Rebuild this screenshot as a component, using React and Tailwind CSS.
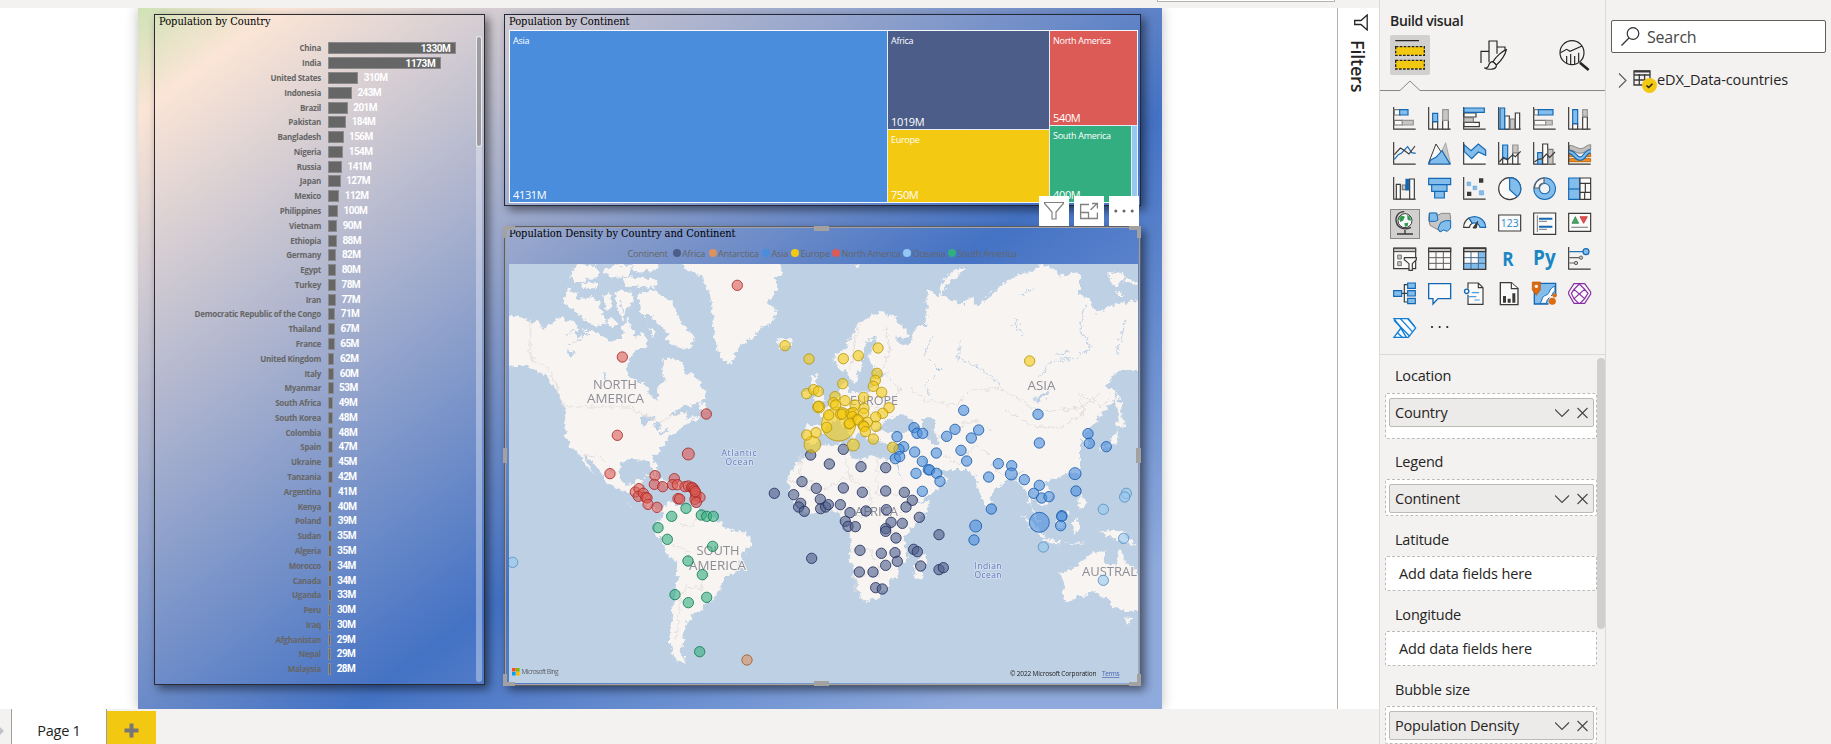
import React from "react";

const ui = "font-['Open_Sans','Noto_Sans',sans-serif]";
const serif = "font-['DejaVu_Serif_Condensed','DejaVu_Serif',serif]";

const countries = [
  ["China", 1330], ["India", 1173], ["United States", 310], ["Indonesia", 243], ["Brazil", 201],
  ["Pakistan", 184], ["Bangladesh", 156], ["Nigeria", 154], ["Russia", 141], ["Japan", 127],
  ["Mexico", 112], ["Philippines", 100], ["Vietnam", 90], ["Ethiopia", 88], ["Germany", 82],
  ["Egypt", 80], ["Turkey", 78], ["Iran", 77], ["Democratic Republic of the Congo", 71],
  ["Thailand", 67], ["France", 65], ["United Kingdom", 62], ["Italy", 60], ["Myanmar", 53],
  ["South Africa", 49], ["South Korea", 48], ["Colombia", 48], ["Spain", 47], ["Ukraine", 45],
  ["Tanzania", 42], ["Argentina", 41], ["Kenya", 40], ["Poland", 39], ["Sudan", 35],
  ["Algeria", 35], ["Morocco", 34], ["Canada", 34], ["Uganda", 33], ["Peru", 30], ["Iraq", 30],
  ["Afghanistan", 29], ["Nepal", 29], ["Malaysia", 28],
];

function CountryChart() {
  return (
    <section className="absolute left-[16px] top-[6px] flex h-[671px] w-[331px] flex-col border border-[#2b2b33] shadow-[4px_4px_9px_rgba(0,0,0,0.5)]">
      <h2 className={`${serif} h-[26px] shrink-0 whitespace-nowrap pl-1 text-[11px] leading-[13px] tracking-[-0.03px] text-black`}>Population by Country</h2>
      <div className="flex flex-col">
        {countries.map(([name, value]) => (
          <div key={name} className="flex h-[14.786px] items-center">
            <span className={`${ui} w-[166px] shrink-0 whitespace-nowrap text-right text-[8px] font-bold leading-none tracking-[-0.27px] text-[#666]`}>{name}</span>
            <div
              className="ml-[7px] flex h-[12px] shrink-0 items-center justify-end border border-[#8b8a8d] bg-[#666] font-[Roboto,sans-serif] text-[10px] font-bold text-white"
              style={{ width: value * 0.0962 + 0.5 }}
            >
              {value > 1000 && <span className="pr-[5px] tracking-[-0.4px]">{value}M</span>}
            </div>
            {value <= 1000 && <span className="pl-[5.5px] font-[Roboto,sans-serif] text-[10px] font-bold leading-none tracking-[-0.6px] text-white">{value}M</span>}
          </div>
        ))}
      </div>
      <div className="absolute right-[2px] top-[21px] h-[646px] w-[6px] rounded-full bg-white/35">
        <div className="h-[111px] w-full rounded-full border border-white/80 bg-[#9c9ca2]" />
      </div>
    </section>
  );
}

function Tile({ name, value, className }) {
  return (
    <div className={`flex flex-col justify-between overflow-hidden pl-[3px] text-white ${ui} ${className}`}>
      <span className="whitespace-nowrap pt-[4px] text-[9px] font-medium leading-[11px] tracking-[-0.28px]">{name}</span>
      <span className="whitespace-nowrap text-[11px] font-medium leading-[15px] tracking-[-0.35px]">{value}</span>
    </div>
  );
}

function Treemap() {
  return (
    <section className="absolute left-[366px] top-[6px] flex h-[192px] w-[637px] flex-col border border-[#23283a] pl-[4px] pr-[2px] shadow-[4px_4px_9px_rgba(0,0,0,0.5)]">
      <h2 className={`${serif} h-[15px] shrink-0 whitespace-nowrap text-[11px] leading-[13px] tracking-[-0.03px] text-black`}>Population by Continent</h2>
      <div className="flex h-[173px] gap-px border border-white/50 bg-white/85">
        <Tile name="Asia" value="4131M" className="w-[377px] bg-[#4a8ddc]" />
        <div className="flex w-[161px] flex-col gap-px">
          <Tile name="Africa" value="1019M" className="h-[98px] bg-[#4c5d8a]" />
          <Tile name="Europe" value="750M" className="flex-1 bg-[#f3c911]" />
        </div>
        <div className="flex flex-1 flex-col gap-px">
          <Tile name="North America" value="540M" className="h-[94px] bg-[#dc5b57]" />
          <div className="flex flex-1 gap-px">
            <Tile name="South America" value="400M" className="w-[81px] bg-[#33ae81]" />
            <div className="flex-1 bg-[#95c8f0]" />
          </div>
        </div>
      </div>
    </section>
  );
}

const palette = {
  africa: ["#4c5d8a", "#222f5e"],
  antarctica: ["#dd915f", "#9c5f35"],
  asia: ["#4a8ddc", "#1a5cab"],
  europe: ["#f3c911", "#b8960a"],
  northAmerica: ["#dc5b57", "#a82a26"],
  oceania: ["#95c8f0", "#5a8fc0"],
  southAmerica: ["#33ae81", "#0f7c52"],
};

const bubbles = [
  { color: "northAmerica", at: "translate(495 260)", points: [[727,76],[382,291],[634,462],[367,526],[345,641],[580,582,18],[480,647],[478,673],[503,680],[538,656],[533,674],[547,674],[570,680],[580,678],[590,682],[594,684],[598,690],[602,700],[603,708],[615,712],[600,718],[604,727],[601,695],[549,716],[554,717],[421,696],[432,686],[430,709],[445,700],[452,712],[456,714],[459,733],[486,742]] },
  { color: "southAmerica", at: "translate(495 260)", points: [[573,745],[530,769],[489,803],[517,838],[619,765],[635,769],[655,769],[653,859],[579,903],[622,944],[540,1004],[635,1012],[580,1028],[614,1175]] },
  { color: "antarctica", at: "translate(495 260)", points: [[756,1200]] },
  { color: "oceania", at: "translate(495 260)", points: [[53,907]] },
  { color: "africa", at: "translate(760 440)", points: [[152,45],[250,28],[208,72],[303,80],[377,83],[126,125],[43,160],[101,164],[169,145],[250,144],[307,157],[377,153],[433,157],[457,181],[438,201],[478,232],[181,178],[122,190],[116,201],[133,214],[182,206],[197,201],[205,194],[241,194],[270,218],[318,213],[379,209],[256,244],[264,259],[286,260],[393,247],[427,250],[377,266],[377,274],[408,294],[300,331],[364,340],[405,338],[377,376],[412,364],[298,396],[339,396],[347,443],[367,447],[461,328],[472,335],[482,378],[537,284],[155,355],[537,389],[550,383]] },
  { color: "asia", at: "translate(780 260)", points: [[551,451],[402,503],[411,520],[428,520],[351,530],[371,560],[357,568],[346,596],[359,590],[404,576],[469,579],[427,604],[445,629],[449,630],[470,640],[480,664],[408,640],[427,694],[525,508],[500,529],[596,510],[574,534],[543,571],[560,603],[655,611],[626,651],[634,747]] },
  { color: "asia", at: "translate(890 380)", points: [[444,103],[448,189],[594,161],[598,190],[649,200],[555,281,18],[558,333],[365,257],[364,282,18],[403,299],[448,316],[431,340],[455,354],[477,350],[448,427,30],[516,407],[515,410],[512,437],[257,438,18],[252,480]] },
  { color: "europe", at: "translate(780 260)", points: [[176,492,51],[97,553,25],[220,555,18],[15,257],[87,297],[190,296],[235,287],[294,264],[291,340],[286,361],[280,379],[305,397],[188,371],[80,401],[101,389],[115,394],[116,441,18],[115,440],[165,410],[160,428],[167,435],[195,422],[225,435],[251,412],[252,445],[327,443],[308,460],[287,471],[288,499],[146,465],[182,463],[187,462],[213,460],[220,458],[217,470],[232,478],[207,492],[209,490],[251,460],[235,480],[262,487],[250,497],[252,500],[256,515],[280,537],[140,502],[80,525],[108,518],[338,562]] },
  { color: "europe", at: "translate(980 190)", points: [[149,513]] },
  { color: "oceania", at: "translate(890 380)", points: [[709,340],[704,351],[640,388],[701,475],[640,601],[460,501]] },
];

function WorldMap() {
  const label = { fontFamily: "'Open Sans', 'Noto Sans', sans-serif" };
  return (
    <svg className="block h-[419px] w-[629px]" viewBox="509 264 629 419">
      <defs>
        <filter id="coast" x="-5%" y="-5%" width="110%" height="110%">
          <feTurbulence type="fractalNoise" baseFrequency="0.2" numOctaves="4" seed="4" />
          <feDisplacementMap in="SourceGraphic" scale="8" xChannelSelector="R" yChannelSelector="G" />
        </filter>
      </defs>
      <rect x="509" y="264" width="629" height="419" fill="#bed0e4" />
      <g filter="url(#coast)" fill="#f7f4f2">
        <g transform="translate(495 260) scale(.33333)">
          <path d="M20 165L75 170 105 182 135 190 143 212 160 190 185 178 200 172 215 182 240 188 250 205 300 215 320 225 345 250 360 245 375 230 385 200 395 175 410 200 420 235 445 220 460 240 455 262 430 265 415 280 400 300 393 325 400 350 430 365 460 380 465 405 485 420 494 400 488 380 510 360 500 340 505 300 530 293 560 310 570 340 600 345 625 385 634 408 610 430 560 440 530 460 520 477 560 460 575 458 578 475 600 470 614 465 600 480 570 495 555 505 540 520 520 535 510 555 490 575 470 590 475 600 487 625 485 650 475 640 468 612 455 600 430 598 400 597 380 605 373 630 380 660 395 675 420 670 425 658 447 657 440 680 435 695 455 695 460 720 470 745 490 750 505 745 500 757 475 754 450 735 430 707 410 694 390 692 355 680 325 658 322 640 300 615 270 585 262 582 275 605 300 645 285 630 265 605 250 578 225 560 213 530 210 490 215 455 205 440 195 400 170 370 150 345 110 325 85 318 60 318 20 332Z" />
          <path d="M505 745L520 725 545 735 570 735 600 740 620 755 650 765 670 780 680 800 720 810 750 815 767 835 765 860 740 880 735 915 720 940 690 948 680 970 680 985 655 1020 630 1025 625 1050 600 1055 590 1060 592 1080 575 1085 570 1110 560 1130 572 1140 555 1165 560 1190 577 1208 550 1205 535 1190 525 1160 525 1120 532 1060 540 1020 548 960 550 910 520 890 500 845 480 815 480 790 500 775Z" />
          <path d="M540 -10L575 30 605 38 625 60 645 100 650 150 655 200 665 260 685 300 712 315 718 280 740 255 770 235 800 205 838 180 842 150 812 130 830 110 850 80 840 60 865 45 855 -10Z" />
          <path d="M430 100L470 92 510 110 540 140 560 190 600 235 580 268 545 262 510 235 525 220 480 190 470 165 440 165Z" />
          <path d="M205 130L215 85 245 95 250 120 290 110 315 130 320 165 340 185 300 200 265 180 240 150Z" />
          <path d="M325 110L345 95 352 140 335 150ZM360 95L415 95 410 130 395 150 385 180 365 150ZM225 45L250 12 300 15 310 50 275 60 240 70ZM320 30L370 12 410 20 400 50 350 55ZM380 55L440 50 490 60 480 80 400 80ZM400 -10L500 -10 480 30 420 40ZM260 70L310 66 300 85 262 84ZM345 172L372 190 350 205 338 190ZM430 230L455 245 445 265 425 255ZM460 200L480 215 470 230ZM610 430L635 432 630 455 612 448Z" />
          <path d="M445 640L480 650 530 670 510 672 470 655ZM535 668L575 672 570 685 530 682ZM845 240L865 235 895 235 885 260 855 265Z" />
        </g>
        <g transform="translate(780 260) scale(.33333)">
          <path d="M160 300L165 280 200 265 215 225 235 195 260 175 300 155 345 170 355 190 380 205 387 230 355 238 345 228 365 258 390 248 400 215 420 195 455 195 470 170 510 180 550 200 556 120 580 112 584 160 590 205 602 190 594 150 620 130 660 125 650 95 710 55 900 60 900 640 690 625 655 655 634 680 630 705 615 738 598 690 590 640 560 625 530 628 500 632 470 620 445 608 425 590 440 620 470 628 480 640 503 652 490 675 450 705 420 722 392 720 378 690 360 645 345 600 342 580 350 560 352 548 330 548 300 545 285 530 285 515 310 510 350 512 400 505 385 485 370 475 345 475 330 490 310 490 305 500 285 510 280 540 255 530 240 500 220 480 210 465 235 500 247 520 225 522 222 548 205 515 180 478 150 490 140 505 115 530 108 552 75 550 72 520 80 495 120 497 130 490 125 470 110 450 140 440 165 420 185 405 180 390 183 370 198 368 205 395 235 400 270 390 285 370 275 355 300 350 325 338 290 330 270 305 268 280 288 250 290 232 265 240 250 270 245 290 250 310 235 340 225 372 210 360 200 330 175 328Z" />
          <path d="M455 150L475 110 490 60 520 35 555 18 560 28 510 62 485 100 470 130 487 158ZM92 350L115 343 107 368 122 385 134 425 96 432 108 410 95 385ZM66 395L90 390 88 412 64 415ZM225 12L240 12 232 28ZM700 60L900 100 900 40Z" />
        </g>
        <g transform="translate(760 440) scale(.33333)">
          <path d="M150 35L165 30 200 15 262 14 265 35 280 50 305 62 330 48 395 60 414 58 405 75 420 110 440 150 455 177 480 187 510 180 500 210 470 250 440 280 430 300 440 330 440 360 410 385 410 410 390 420 385 445 360 470 310 485 300 465 285 420 280 385 265 355 275 320 270 280 250 255 245 225 215 212 180 215 140 220 110 205 90 165 85 110 100 85 125 60 140 40Z" />
          <path d="M466 370L480 350 500 338 503 358 485 410 470 418 462 400Z" />
        </g>
        <g transform="translate(980 190) scale(.33333)">
          <path d="M-160 300L-40 350 0 345 30 315 70 280 110 255 165 240 180 222 230 240 238 270 220 300 270 320 325 318 350 370 400 345 500 325 500 540 415 540 375 590 400 600 408 625 385 650 350 690 330 715 315 725 330 775 310 760 300 740 275 745 270 730 258 750 285 770 285 815 270 845 240 860 210 870 190 875 205 895 222 920 200 940 185 955 170 930 155 920 150 950 170 970 180 1000 165 990 145 930 142 910 130 890 110 870 95 860 70 880 40 900 30 940 15 950 -5 900 -15 860 -30 840 -160 840Z" />
          <path d="M410 598L422 640 428 690 440 700 420 712 408 650ZM385 250L430 252 430 275 395 288ZM435 262L472 275 465 282 440 275ZM410 300L430 318 415 318Z" />
        </g>
        <g transform="translate(890 380) scale(.33333)">
          <path d="M500 402L530 388 538 402 520 442 500 445ZM393 400L430 430 468 472 452 468 410 425ZM455 475L512 484 508 492 458 482ZM630 455L655 450 700 455 740 500 700 485 660 470ZM545 425L562 415 570 445 552 465 548 445ZM560 350L580 345 590 375 570 390ZM680 120L705 130 690 142 678 140ZM684 145L680 190 640 208 622 214 655 192 672 168ZM510 580L550 565 580 540 600 525 620 512 648 517 640 540 665 560 682 545 690 502 702 540 722 560 760 595 760 695 735 697 700 690 670 680 650 655 610 635 570 650 540 662 522 667 522 620ZM702 712L727 714 715 738ZM520 486L590 488 560 494Z" />
        </g>
        <g fill="#bed0e4">
          <path d="M884 422L892 418 901 414 912 420 919 428 908 432 890 432 881 430Z" />
          <path d="M922 419L932 417 937 422 933 428 937 438 938 445 931 445 928 436 922 427Z" />
          <path d="M641 417L650 415 656 419 649 421 644 426 641 424ZM655 421L662 424 658 431 654 427ZM657 433L668 429 666 432 659 435Z" />
          <path d="M1033 400L1044 393 1050 388 1046 397 1038 402Z" />
          <path d="M575 331L582 327 585 334 578 338ZM567 350L575 352 570 358ZM604 372L608 378 604 384Z" />
        </g>
      </g>
      <g filter="url(#coast)" fill="none" stroke="#e3dedb" strokeWidth="1">
        <path d="M530 321V357L548 370 556 384 563 407H630L641 414 660 422 675 415 688 412M583 455L602 458 612 470 618 474M625 500L632 508M670 515L676 520 690 528 700 514 715 516M672 545L685 548 697 570 708 575 700 590 688 585 680 600 676 640" />
        <path d="M860 320L855 340 850 370M885 325L890 350 882 370 900 390 895 400M815 410L830 415 845 410M865 400L885 415M910 388L925 400 955 405 970 390 1000 388 1020 400 1040 412 1080 408 1100 395M930 430L945 440 960 425 975 420 990 430M945 455L960 465 975 445 990 455M1005 410L1030 425 1060 428 1085 412 1078 393 1095 402 1100 408 1110 395M990 465L1010 478 1025 470M1030 490L1040 505" />
        <path d="M790 480L820 495M800 455V475L825 490 845 478M845 455L850 480 870 488M877 455V495H905M870 488V515L850 520M820 495V515M840 510L850 535M850 550H870L880 570M860 575H880M880 525L900 535M855 592V575M895 520L905 510" />
      </g>
      <g filter="url(#coast)" fill="none" stroke="#bed0e4" strokeWidth="1">
        <path d="M932 335L925 355 940 370 925 385 930 395M961 340L958 358 980 368 1000 385M1085 305L1080 330 1092 348 1075 358 1050 362 1040 378M1125 320L1120 340 1118 355M1015 320L1022 335M1010 325H1020M1055 355L1070 352M1020 295L1035 288" />
        <path d="M568 345L580 340 590 330 600 325M620 300L625 320 615 330M575 320L590 335M565 335L575 330" />
      </g>
      <g style={label} fill="#8d8d95" fontSize="13" textAnchor="middle" stroke="#f7f4f2" strokeWidth="2" paintOrder="stroke">
        <text x="615" y="388.5" textLength="44" lengthAdjust="spacingAndGlyphs">NORTH</text>
        <text x="615.5" y="403" textLength="57" lengthAdjust="spacingAndGlyphs">AMERICA</text>
        <text x="718" y="555" textLength="43" lengthAdjust="spacingAndGlyphs">SOUTH</text>
        <text x="717.5" y="569.5" textLength="57" lengthAdjust="spacingAndGlyphs">AMERICA</text>
        <text x="874" y="405" textLength="48" lengthAdjust="spacingAndGlyphs">EUROPE</text>
        <text x="876.5" y="516" textLength="43" lengthAdjust="spacingAndGlyphs">AFRICA</text>
        <text x="1041.5" y="390" textLength="28" lengthAdjust="spacingAndGlyphs">ASIA</text>
        <text x="1082" y="575.5" textAnchor="start" textLength="55" lengthAdjust="spacingAndGlyphs">AUSTRAL</text>
      </g>
      <g style={label} fill="#5f78bd" fontSize="8.5" textAnchor="middle" stroke="#d8e2ef" strokeWidth="1.5" paintOrder="stroke">
        <text x="739" y="456" textLength="35">Atlantic</text>
        <text x="739.5" y="465" textLength="28">Ocean</text>
        <text x="988" y="569" textLength="27">Indian</text>
        <text x="988" y="577.5" textLength="27">Ocean</text>
      </g>
      {bubbles.map((group, i) => (
        <g key={i} transform={`${group.at} scale(.33333)`} fill={palette[group.color][0]} fillOpacity=".6" stroke={palette[group.color][1]} strokeOpacity=".85" strokeWidth="3">
          {group.points.map(([x, y, r = 15.5], j) => <circle key={j} cx={x} cy={y} r={r} />)}
        </g>
      ))}
      <path fill="#f25022" d="M512 668h3.6v3.6h-3.6z" />
      <path fill="#7fba00" d="M516 668h3.6v3.6h-3.6z" />
      <path fill="#00a4ef" d="M512 672h3.6v3.6h-3.6z" />
      <path fill="#ffb900" d="M516 672h3.6v3.6h-3.6z" />
      <g style={label} fontSize="6.5">
        <text x="521.5" y="674.2" fill="#5c5f66" textLength="37">Microsoft Bing</text>
        <text x="1010" y="676" fill="#222" textLength="86.5">© 2022 Microsoft Corporation</text>
        <text x="1102" y="676" fill="#4a63b5" textLength="17.5" textDecoration="underline">Terms</text>
      </g>
    </svg>
  );
}

const legend = [
  ["Africa", "bg-[#4c5d8a]", "w-[36px]"],
  ["Antarctica", "bg-[#dd915f]", "w-[53.5px]"],
  ["Asia", "bg-[#4a8ddc]", "w-[29px]"],
  ["Europe", "bg-[#f3c911]", "w-[41px]"],
  ["North America", "bg-[#dc5b57]", "w-[71px]"],
  ["Oceania", "bg-[#95c8f0]", "w-[45px]"],
  ["South America", "bg-[#33ae81]", "w-[66px]"],
];

function MapVisual() {
  const handle = "absolute bg-[#a3a2a0]";
  const corner = "absolute h-[12px] w-[12px] border-[#a3a2a0]";
  return (
    <section className="absolute left-[366px] top-[218px] flex h-[460px] w-[637px] flex-col border border-[#5c5f68] pl-[4px] shadow-[4px_4px_9px_rgba(0,0,0,0.5)]">
      <h2 className={`${serif} h-[18px] shrink-0 whitespace-nowrap text-[11px] leading-[13px] tracking-[-0.03px] text-black`}>Population Density by Country and Continent</h2>
      <div className={`flex h-[19px] shrink-0 items-center whitespace-nowrap pb-[2px] pl-[118.5px] text-[9.2px] leading-none tracking-[-0.25px] text-[#666] ${ui}`}>
        <span className="w-[45px]">Continent</span>
        {legend.map(([name, color, width]) => (
          <span key={name} className={`flex shrink-0 items-center gap-[1.5px] ${width}`}>
            <i className={`h-[8px] w-[8px] shrink-0 rounded-full ${color}`} />
            {name}
          </span>
        ))}
      </div>
      <WorldMap />
      <div className="absolute inset-0 border border-[#a3a2a0]" />
      <i className={`${corner} left-[-2px] top-[-1px] border-l-4 border-t-4`} />
      <i className={`${corner} right-[-1px] top-[-1px] border-r-4 border-t-4`} />
      <i className={`${corner} bottom-[-1px] left-[-2px] border-b-4 border-l-4`} />
      <i className={`${corner} bottom-[-1px] right-[-1px] border-b-4 border-r-4`} />
      <i className={`${handle} left-[309px] top-[-1px] h-[5px] w-[15px]`} />
      <i className={`${handle} bottom-[-1px] left-[309px] h-[5px] w-[15px]`} />
      <i className={`${handle} left-[-2px] top-[221px] h-[15px] w-[4px]`} />
      <i className={`${handle} right-[-1px] top-[221px] h-[15px] w-[5px]`} />
    </section>
  );
}

function VisualToolbar() {
  const button = "flex h-[30px] w-[30px] items-center justify-center bg-white";
  return (
    <div className="absolute left-[901px] top-[188px] flex gap-[5px]">
      <div className={button}>
        <svg className="h-5 w-5" viewBox="0 0 20 20" fill="none" stroke="#808080" strokeWidth="1.2"><path d="M.6 1.5h18.8v1L12 11v7H8v-7L.6 2.500z" /></svg>
      </div>
      <div className={button}>
        <svg className="h-5 w-5" viewBox="0 0 20 20" fill="none" stroke="#808080" strokeWidth="1.3"><path d="M10 3.500H1.600V17.500H18.400V11.500M1.600 11.500H9.500V17.500M11.500 9L17.500 3M13 2.500H18.400V7.500" /></svg>
      </div>
      <div className={button}>
        <svg className="h-5 w-5" viewBox="0 0 20 20" fill="#666"><circle cx="1.800" cy="10" r="1.500" /><circle cx="10" cy="10" r="1.500" /><circle cx="18.200" cy="10" r="1.500" /></svg>
      </div>
    </div>
  );
}

const K = "#3b3a39";
const B = "#83bdec";
const D = "#1468b3";
const G = "#c8c6c4";
const W = "#fafafa";
const axis = <path d="M2 0V66.500H68" fill="none" stroke={K} strokeWidth="3.500" />;

const visualIcons = [
  <>{axis}<g strokeWidth="3.500"><path d="M4 8h18v16H4zM4 40h24v14H4z" fill={W} stroke="#797775" /><path d="M20 8h25v16H20z" fill={B} stroke={D} /><path d="M28 40h33v14H28z" fill={G} stroke="#979593" /></g></>,
  <>{axis}<g strokeWidth="3.500"><path d="M14 44h15v22H14zM44 40h17v26H44z" fill={W} stroke={K} /><path d="M14 19h15v25H14z" fill={B} stroke={D} /><path d="M44 8h17v32H44z" fill={G} stroke="#979593" /></g></>,
  <>{axis}<g strokeWidth="3.500"><path d="M3 18h36v12H3zM3 46h46v13H3z" fill={W} stroke={K} /><path d="M3 32h28v13H3z" fill={G} stroke="#797775" /><path d="M3 3h61v13H3z" fill={B} stroke={D} /></g></>,
  <>{axis}<g strokeWidth="3.500"><path d="M20 27h14v39H20zM52 18h13v48H52z" fill={W} stroke={K} /><path d="M36 36h14v30H36z" fill={G} stroke="#797775" /><path d="M6 3h14v63H6z" fill={B} stroke={D} /></g></>,
  <>{axis}<g strokeWidth="3.500"><path d="M4 8h14v16H4zM4 40h34v14H4z" fill={W} stroke="#797775" /><path d="M16 8h44v16H16z" fill={B} stroke={D} /><path d="M38 40h20v14H38z" fill={G} stroke="#979593" /></g></>,
  <>{axis}<g strokeWidth="3.500"><path d="M14 50h15v16H14zM44 30h14v36H44z" fill={W} stroke={K} /><path d="M14 8h15v42H14z" fill={B} stroke={D} /><path d="M44 8h14v20H44z" fill={G} stroke="#979593" /></g></>,
  <>{axis}<g fill="none" strokeWidth="3.500"><path d="M4 52L16 38 26 33 44 14 56 32 68 34" stroke={D} /><path d="M4 38L22 18 32 24 48 36 66 12" stroke={K} /></g></>,
  <><path d="M2 62L24 6 46 40 66 66H2z" fill={W} stroke={K} strokeWidth="3" /><path d="M53 2L68 66 40 30z" fill={G} stroke="#979593" strokeWidth="2" /><path d="M2 66L8 54 24 46 42 26 66 66z" fill={B} stroke={D} strokeWidth="3.500" /></>,
  <><path d="M3 22V64H68V38L48 26 28 46z" fill={W} /><path d="M3 8L24 26 46 6 68 24V40L46 30 26 50 3 28z" fill={B} stroke={D} strokeWidth="3.500" />{axis}</>,
  <>{axis}<g strokeWidth="3.500"><path d="M14 50h15v16H14zM44 32h16v34H44z" fill={W} stroke={K} /><path d="M14 9h15v40H14z" fill={B} stroke={D} /><path d="M44 9h16v23H44z" fill={G} stroke="#979593" /></g><path d="M4 60L16 46 28 54 44 38 52 44 68 28" fill="none" stroke={K} strokeWidth="3.500" /></>,
  <>{axis}<g strokeWidth="3.500"><path d="M14 32h14v34H14z" fill={B} stroke={D} /><path d="M29 6h15v60H29z" fill={W} stroke={K} /><path d="M45 22h15v44H45z" fill={G} stroke="#797775" /></g><path d="M4 60L16 52 28 50 40 36 50 46 66 30" fill="none" stroke={K} strokeWidth="3.500" /></>,
  <><path d="M4 10C20 10 26 20 38 20 50 20 54 8 68 8V22C54 24 50 34 36 34 24 34 18 24 4 24z" fill="#c2bfbc" stroke="#797775" strokeWidth="2.500" /><path d="M4 34H20V44H4zM52 34H68V44H52zM4 50H68V59H4z" fill="#e8912d" stroke="#c46a0a" strokeWidth="3" /><path d="M4 30C20 30 22 50 36 50 52 50 50 28 68 28" fill="none" stroke={D} strokeWidth="13" /><path d="M4 30C20 30 22 50 36 50 52 50 50 28 68 28" fill="none" stroke={B} strokeWidth="6" />{axis}</>,
  <>{axis}<g strokeWidth="3.500"><path d="M10 22h12v44H10zM50 6h14v60H50z" fill={W} stroke={K} /><path d="M28 24h10v14H28z" fill={G} stroke="#797775" /><path d="M39 7h8v32h-8z" fill={D} stroke={D} /></g></>,
  <g fill={B} stroke={D} strokeWidth="3.500"><path d="M2 4h66v19H2zM11 23h46v20H11zM20 43h29v20H20z" /></g>,
  <>{axis}<path d="M48 4h13v13H48zM12 44h13v13H12z" fill={K} /><path d="M12 15h11v11H12zM30 27h11v11H30zM49 41h13v13H49z" fill={B} stroke="#5a9fd8" strokeWidth="1.500" /></>,
  <><circle cx="35" cy="35" r="33" fill={W} stroke={K} strokeWidth="3.500" /><path d="M35 2A33 33 0 0 1 58 59L35 38z" fill={B} stroke={D} strokeWidth="3.500" /></>,
  <><circle cx="35" cy="35" r="24" fill="none" stroke={D} strokeWidth="20" /><circle cx="35" cy="35" r="24" fill="none" stroke={B} strokeWidth="14" /><path d="M4 33A32 32 0 0 1 33 3V18A16 16 0 0 0 18 33z" fill={W} stroke="#605e5c" strokeWidth="3.500" /></>,
  <g strokeWidth="3.500"><path d="M2 3h33v64H2z" fill={B} stroke={D} /><path d="M2 36h33" stroke={D} /><path d="M36 3h32v16H36zM36 19h16v27H36zM52 19h16v27H52zM36 46h32v21H36zM50 46v21" fill={W} stroke={K} /></g>,
  <><circle cx="36" cy="26" r="21" fill={W} stroke={K} strokeWidth="3" /><path d="M24 10L36 14 30 26 22 30 18 20zM42 8L52 14 54 26 44 24zM34 34L46 32 44 42 36 44z" fill="#2e9b4f" /><path d="M34 -1C14 -1 6 16 10 30 14 48 34 56 54 46M36 54V65M12 66H60" fill="none" stroke={K} strokeWidth="4" /></>,
  <><path d="M4 4H26L30 10 40 4 66 4 68 22 56 40 40 58 24 50 6 40 2 22z" fill={G} stroke="#8a8886" strokeWidth="3" /><path d="M4 3H26L30 24 22 28H4z" fill={B} stroke={D} strokeWidth="3" /><path d="M38 32L52 26H68V48L58 58 46 54 36 60 30 50z" fill={B} stroke={D} strokeWidth="3" /></>,
  <><path d="M2 46A33 33 0 0 1 18 18L28 34A16 16 0 0 0 19 46z" fill={W} stroke={K} strokeWidth="3.500" /><path d="M18 18A34 34 0 0 1 68 46H51A17 17 0 0 0 28 34z" fill={B} stroke={D} strokeWidth="3.500" /><path d="M30 48L44 28 40 48z" fill={K} stroke={K} strokeWidth="3" /></>,
  <><path d="M2 9h66v48H2z" fill={W} stroke={K} strokeWidth="3.500" /><text x="35" y="44" textAnchor="middle" fontFamily="Open Sans, sans-serif" fontSize="31" fill="#2b88c8" textLength="54">123</text></>,
  <><path d="M2 3h66v64H2z" fill={W} stroke={K} strokeWidth="3.500" /><path d="M13 10v50" stroke="#797775" strokeWidth="3" /><path d="M18 20h40M18 44h40" stroke={D} strokeWidth="6" /><path d="M18 28h24M18 52h24" stroke="#797775" strokeWidth="3" /></>,
  <><path d="M2 4h66v54H2z" fill={W} stroke={K} strokeWidth="3.500" /><path d="M12 34L22 14 32 34z" fill="#4aa564" stroke="#1b7a3a" strokeWidth="2" /><path d="M36 14H58L47 34z" fill="#e0524f" stroke="#c2201d" strokeWidth="2" /><path d="M10 46h50" stroke="#979593" strokeWidth="4" /></>,
  <><path d="M2 3h66v62H2z" fill={W} stroke={K} strokeWidth="3.500" /><path d="M2 4h66v10H2z" fill={G} stroke={K} strokeWidth="3" /><path d="M14 24h11v12H14zM14 44h11v12H14z" fill={G} stroke="#797775" strokeWidth="3" /><path d="M34 32H70V38L58 50V70H48V50L34 38z" fill={W} stroke={K} strokeWidth="3.500" /></>,
  <g stroke={K} strokeWidth="3.500"><path d="M2 3h66v64H2z" fill={W} /><path d="M2 4h66v10H2z" fill={G} /><path d="M24 14v52M46 14v52M2 32h66M2 49h66" stroke="#605e5c" strokeWidth="3" fill="none" /></g>,
  <g stroke={K} strokeWidth="3.500"><path d="M2 3h66v64H2z" fill={W} /><path d="M46 14h22v52H2V49H24h22z" fill={B} stroke="none" /><path d="M2 4h66v10H2z" fill={G} /><path d="M24 14v52M46 14v52M2 32h66M2 49h66" stroke="#44688c" strokeWidth="3" fill="none" /><path d="M2 3h66v64H2z" fill="none" /></g>,
  <text x="30" y="58" textAnchor="middle" fontFamily="Open Sans, sans-serif" fontWeight="700" fontSize="58" fill="#1a86c4" textLength="34" lengthAdjust="spacingAndGlyphs">R</text>,
  <text x="34" y="53" textAnchor="middle" fontFamily="Open Sans, sans-serif" fontWeight="700" fontSize="62" fill="#1a86c4" textLength="68" lengthAdjust="spacingAndGlyphs">Py</text>,
  <>{axis}<path d="M4 14H46" stroke={D} strokeWidth="3.500" /><circle cx="54" cy="14" r="9" fill={B} stroke={D} strokeWidth="3.500" /><path d="M4 32H34M4 48H20" stroke="#605e5c" strokeWidth="3.500" /><circle cx="39" cy="32" r="5" fill={G} stroke="#605e5c" strokeWidth="3" /><circle cx="24" cy="48" r="5" fill={G} stroke="#605e5c" strokeWidth="3" /></>,
  <><path d="M24 34H42M46 8H34V60H46" fill="none" stroke={K} strokeWidth="3.500" /><path d="M2 26h24v17H2zM44 3h23v16H44zM44 26h23v16H44zM44 49h23v16H44z" fill={B} stroke={D} strokeWidth="3.500" /></>,
  <path d="M2 5H68V50H30L15 66V50H2z" fill={W} stroke={D} strokeWidth="4" />,
  <><path d="M15 20V3H46L60 17V67H15V38" fill={W} stroke={K} strokeWidth="3.500" /><path d="M46 3V17H60" fill="none" stroke={K} strokeWidth="3.500" /><circle cx="11" cy="28" r="6.500" fill={W} stroke={D} strokeWidth="4" /><path d="M26 32H48M18 44H40M34 54H50" stroke="#4a9fe0" strokeWidth="3.500" /></>,
  <><path d="M7 2H40L60 20V68H7z" fill={W} stroke={K} strokeWidth="4" /><path d="M40 2V20H60" fill={W} stroke={K} strokeWidth="3.500" /><path d="M15 42h9v20h-9zM29 50h9v12h-9zM43 34h9v28h-9z" fill={K} /></>,
  <><path d="M4 4H68V66H4z" fill={B} stroke={D} strokeWidth="4" /><path d="M20 64C30 56 24 44 38 40 54 34 44 22 66 12V26C56 34 60 42 48 48 40 54 42 60 40 64z" fill={W} stroke={D} strokeWidth="3" /><path d="M50 42H72V70H46z" fill="#f3f2f1" /><path d="M-2 0H22V24L10 40-2 24z" fill="#dd6b10" stroke="#b85408" strokeWidth="2" /><circle cx="10" cy="13" r="5" fill={W} /><circle cx="65" cy="40" r="6.500" fill="#dd6b10" /><circle cx="58" cy="58" r="10.500" fill="#dd6b10" /></>,
  <g fill={W} stroke="#8a2da5" strokeWidth="3.500"><path d="M18 5H50L68 30V36L50 64H18L2 36V30z" /><path d="M34 6L18 22 34 36 18 50 32 64M34 6L50 22 34 36 50 50 36 64M18 22L10 34 18 50M50 22L60 34 50 50" fill="none" /></g>,
  <g fill={W} stroke="#0f7fd8" strokeWidth="4"><path d="M3 5H46L68 33 46 61H3L24 33z" /><path d="M3 10L50 58M22 5L58 44M44 5L64 27M14 48L28 61M24 34L40 61" fill="none" /></g>,
  <g fill="#201f1e"><circle cx="12" cy="30" r="3.200" /><circle cx="35" cy="30" r="3.200" /><circle cx="58" cy="30" r="3.200" /></g>,
];

function FieldWell({ label, field, labelClass, wellClass }) {
  return (
    <>
      <div className={`shrink-0 pl-[15px] text-[14.500px] leading-[20px] tracking-[-0.2px] ${labelClass}`}>{label}</div>
      <div className={`ml-[5px] flex w-[212px] shrink-0 flex-col rounded-[2px] border border-dashed border-[#bdbbb8] bg-white ${wellClass}`}>
        {field ? (
          <div className="ml-[3px] mt-[4px] flex h-[29px] w-[205px] shrink-0 items-center justify-between rounded-[2px] border border-[#bdbbb8] bg-[#edebe9] pl-[5px] pr-[5px] text-[14.500px] tracking-[-0.2px]">
            <span>{field}</span>
            <svg className="h-[12px] w-[33px]" viewBox="0 0 33 12" fill="none" stroke="#484644" strokeWidth="1.100"><path d="M0 2.500L7 9.500 14 2.500M22.500 1L32.500 11M32.500 1L22.500 11" /></svg>
          </div>
        ) : (
          <span className="pl-[13px] text-[14.500px] leading-[33px] tracking-[-0.13px]">Add data fields here</span>
        )}
      </div>
    </>
  );
}

function BuildPane() {
  return (
    <aside className={`flex h-full w-[226px] shrink-0 flex-col overflow-hidden border-r border-[#dbdad8] bg-[#f3f2f1] text-[#252423] ${ui}`}>
      <h2 className="h-[35px] shrink-0 pl-[10px] pt-[11px] text-[14px] font-semibold leading-[20px] tracking-[-0.35px]">Build visual</h2>
      <div className="flex h-[40px] shrink-0 items-center pl-[10px]">
        <svg className="h-[40px] w-[40px] rounded-[2px] bg-[#d2d0ce]" viewBox="0 0 120 120">
          <path d="M16 17H87" stroke="#252423" strokeWidth="4" />
          <path d="M17 35H103V61H17zM17 76H103V102H17z" fill="#f2c811" stroke="#252423" strokeWidth="4" strokeDasharray="8 4" />
        </svg>
        <svg className="ml-[47px] h-[32px] w-[32px]" viewBox="0 0 96 96" fill="none" stroke="#252423" strokeWidth="3.500">
          <path d="M12 72V37H36V70M36 62V6H60V44M60 24H84V34" />
          <path d="M88 32C76 36 56 54 48 68L58 78C72 66 86 46 88 32z" fill="#f3f2f1" />
          <path d="M48 68C38 68 36 74 34 82 31 88 26 88 22 86 34 94 60 92 58 78z" fill="#f3f2f1" />
        </svg>
        <svg className="ml-[47px] h-[34px] w-[34px]" viewBox="0 0 102 102" fill="none" stroke="#252423" strokeWidth="3.500">
          <circle cx="48" cy="44" r="36" />
          <path d="M13 44L32 34 42 40 78 24M32 77V54M44 80V48M56 78V54M68 72V44" />
          <path d="M72 74L98 96" strokeWidth="8" />
        </svg>
      </div>
      <svg className="h-[17px] w-[226px] shrink-0" viewBox="0 0 226 17" fill="none" stroke="#8a8886"><path d="M0 15.500H20L30 6 40 15.500H226" /></svg>
      <div className="grid h-[262px] shrink-0 grid-cols-[repeat(6,35px)] grid-rows-[repeat(7,35px)] pl-[7px] pt-[9px]">
        {visualIcons.map((icon, i) => (
          <div key={i} className={i === 18 ? "m-auto flex h-[30px] w-[30px] items-center justify-center border border-[#8a8886] bg-[#d2d0ce]" : "flex items-center justify-center"}>
            <svg className="h-[23.333px] w-[23.333px] overflow-visible" viewBox="0 0 70 70">{icon}</svg>
          </div>
        ))}
      </div>
      <div className="relative flex flex-1 flex-col overflow-hidden border-t border-[#dbdad8]">
        <FieldWell label="Location" field="Country" labelClass="mt-[11px]" wellClass="mt-[7px] h-[46px]" />
        <FieldWell label="Legend" field="Continent" labelClass="mt-[13px]" wellClass="mt-[7px] h-[37px]" />
        <FieldWell label="Latitude" labelClass="mt-[14px]" wellClass="mt-[6px] h-[35px]" />
        <FieldWell label="Longitude" labelClass="mt-[14px]" wellClass="mt-[6px] h-[35px]" />
        <FieldWell label="Bubble size" field="Population Density" labelClass="mt-[14px]" wellClass="mt-[6px] h-[38px]" />
        <div className="absolute right-0 top-[3px] h-[271px] w-[8px] rounded-full bg-[#d0cfcd]" />
      </div>
    </aside>
  );
}

function DataPane() {
  return (
    <aside className={`flex h-full flex-1 flex-col bg-[#f3f2f1] text-[#252423] ${ui}`}>
      <div className="ml-[5px] mt-[20px] flex h-[33px] w-[215px] shrink-0 items-center rounded-[2px] border border-[#605e5c] bg-white pl-[9px]">
        <svg className="h-[19px] w-[19px]" viewBox="0 0 19 19" fill="none" stroke="#323130" strokeWidth="1.200"><circle cx="12" cy="6.500" r="5.800" /><path d="M8 11L.5 18.500" /></svg>
        <span className="pl-[7px] pt-[1px] text-[16px] tracking-[-0.2px] text-[#484644]">Search</span>
      </div>
      <div className="mt-[15px] flex h-[24px] items-center pl-[12px]">
        <svg className="h-[15px] w-[9px]" viewBox="0 0 9 15" fill="none" stroke="#605e5c" strokeWidth="1.200"><path d="M1 .5L8 7.500 1 14.500" /></svg>
        <svg className="ml-[6px] h-[26px] w-[24px] overflow-visible" viewBox="0 0 24 26">
          <path d="M1 4H17V18H1zM1 8H17M1 13H17M6.300 7V18M11.600 7V18" fill="none" stroke="#3b3a39" strokeWidth="1.300" />
          <path d="M1 4.500H17" stroke="#3b3a39" strokeWidth="2" />
          <circle cx="16.500" cy="18.500" r="7.500" fill="#f2c811" />
          <path d="M13.500 18.500L15.700 20.500 19.500 16.800" fill="none" stroke="#252423" strokeWidth="1.600" />
        </svg>
        <span className="text-[14.500px] tracking-[-0.12px]">eDX_Data-countries</span>
      </div>
    </aside>
  );
}

export default function App() {
  return (
    <div className="flex h-[744px] w-[1831px] overflow-hidden bg-[#f3f2f1]">
      <div className="flex w-[1380px] shrink-0 flex-col border-r border-[#dbdad8]">
        <div className="flex h-[8px] shrink-0 justify-end">
          <div className="mr-[44px] h-[2px] w-[178px] border-x border-b border-[#b5b3b1] bg-white" />
        </div>
        <div className="flex h-[701px] shrink-0 bg-white">
          <main className="h-full w-[1337px] shrink-0 overflow-hidden pl-[138px]">
            <div className="relative h-full w-[1024px] bg-[linear-gradient(143.7deg,#cfe2b6_0%,#fbe5d6_7.2%,#4472c4_59%,#8faadc_90%,#8faadc_100%)] shadow-[0_0_12px_rgba(0,0,0,0.25)]">
              <CountryChart />
              <Treemap />
              <MapVisual />
              <VisualToolbar />
            </div>
          </main>
          <div className="flex flex-1 flex-col items-center border-l border-[#b3b0ad] pt-[6px]">
            <svg className="ml-[4px] h-[17px] w-[14px]" viewBox="0 0 14 17" fill="none" stroke="#252423" strokeWidth="1.300"><path d="M13.200 1V16L7 10.500H.7V6.500H7z" /></svg>
            <span className={`${ui} mr-[2px] mt-[9px] text-[18px] font-semibold leading-[20px] tracking-[-0.2px] text-[#252423] [writing-mode:vertical-rl]`}>Filters</span>
          </div>
        </div>
        <footer className={`flex h-[35px] items-stretch ${ui}`}>
          <div className="flex w-[11px] items-center pt-[8px]">
            <svg className="h-[8px] w-[4px]" viewBox="0 0 4 8" fill="#c0c4c8"><path d="M0 0L4 4 0 8z" /></svg>
          </div>
          <div className="flex w-[96px] items-center justify-center border-x border-[#a19f9d] bg-white pt-[8px] text-[14.500px] tracking-[-0.250px] text-[#201f1e]">Page 1</div>
          <div className="mt-[2px] flex w-[49px] items-center justify-center bg-[#f2c811] pt-[6px]">
            <svg className="h-[15px] w-[15px]" viewBox="0 0 15 15"><path d="M7.500 .5V14.500M.5 7.500H14.500" stroke="#797775" strokeWidth="4" /></svg>
          </div>
        </footer>
      </div>
      <BuildPane />
      <DataPane />
    </div>
  );
}
